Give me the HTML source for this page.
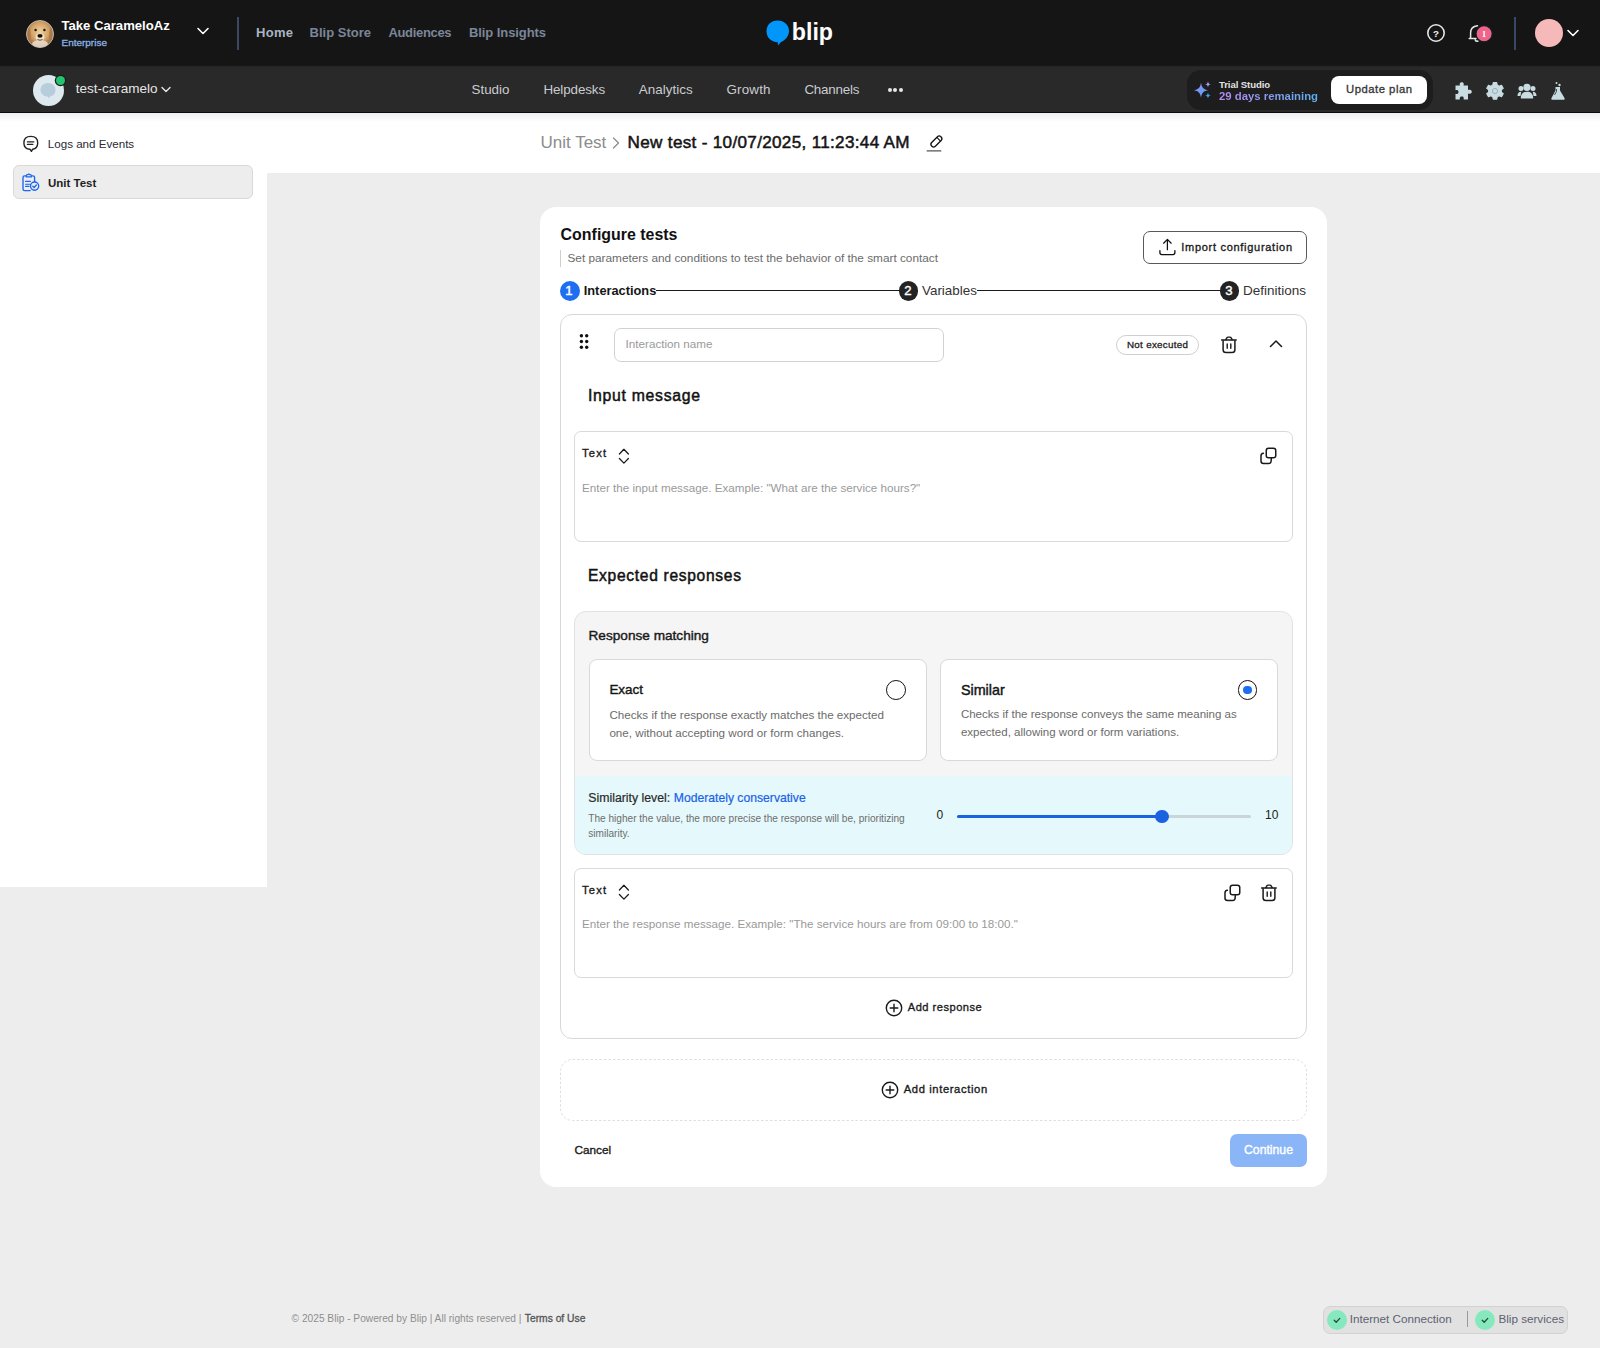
<!DOCTYPE html>
<html><head><meta charset="utf-8"><title>Unit Test</title>
<style>
html,body{margin:0;padding:0;width:1600px;height:1348px;overflow:hidden;background:#ededed}
body{position:relative;font-family:"Liberation Sans",sans-serif}
.a{position:absolute}
.t{position:absolute;line-height:1;white-space:nowrap}
</style></head><body>
<div class="a" style="left:0px;top:0px;width:1600px;height:1348px;background:#ededed"></div>
<div class="a" style="left:0px;top:0px;width:1600px;height:66px;background:#151515"></div>
<div class="a" style="left:0px;top:65px;width:1600px;height:1px;background:#18191a"></div>
<div class="a" style="left:0px;top:66px;width:1600px;height:46px;background:#292929"></div>
<div class="a" style="left:0px;top:66px;width:1600px;height:1px;background:#222324"></div>
<div class="a" style="left:0px;top:112px;width:1600px;height:1px;background:#0a0a0a"></div>
<div class="a" style="left:0px;top:113px;width:267px;height:774px;background:#fff"></div>
<div class="a" style="left:267px;top:113px;width:1333px;height:60px;background:#fff"></div>
<div class="a" style="left:0px;top:113px;width:1600px;height:9px;background:linear-gradient(#eceef2,rgba(255,255,255,0))"></div>
<svg class="a" style="left:26px;top:19.5px;" width="28" height="28" viewBox="0 0 28 28">
<defs><radialGradient id="dg" cx="50%" cy="42%" r="58%"><stop offset="0" stop-color="#f0d2a0"/><stop offset="0.55" stop-color="#d4a469"/><stop offset="1" stop-color="#8e6236"/></radialGradient>
<clipPath id="dc"><circle cx="14" cy="14" r="13.5"/></clipPath></defs>
<circle cx="14" cy="14" r="13.5" fill="url(#dg)"/>
<g clip-path="url(#dc)">
<path d="M0 4 C3 6 5 10 5 16 C5 22 2 26 0 28 Z" fill="#a87444" opacity="0.7"/>
<path d="M28 4 C25 6 23 10 23 16 C23 22 26 26 28 28 Z" fill="#a87444" opacity="0.7"/>
<ellipse cx="14" cy="24" rx="8" ry="4" fill="#efe6d8" opacity="0.8"/>
</g>
<ellipse cx="14" cy="17" rx="4.5" ry="3.6" fill="#f3e3c8"/>
<ellipse cx="14" cy="15.8" rx="2.6" ry="1.9" fill="#15100c"/>
<path d="M11.5 19.5 Q14 21 16.5 19.5" fill="none" stroke="#3a2a1a" stroke-width="0.8"/>
<circle cx="9.6" cy="10" r="1.2" fill="#1e140c"/><circle cx="18.4" cy="10" r="1.2" fill="#1e140c"/>
<circle cx="14" cy="14" r="13.5" fill="none" stroke="#c9c2b8" stroke-width="0.9"/>
</svg>
<div class="t" style="left:61.50px;top:18.71px;font-size:13.1px;font-weight:700;color:#ffffff;">Take CarameloAz</div>
<div class="t" style="left:61.50px;top:38.45px;font-size:9.98px;font-weight:400;color:#8cb1e6;-webkit-text-stroke:0.30px #8cb1e6;">Enterprise</div>
<svg class="a" style="left:196px;top:27.2px;" width="14" height="9" viewBox="0 0 14 9"><path d="M2 1.5 L7 6.5 L12 1.5" fill="none" stroke="#fff" stroke-width="1.6" stroke-linecap="round" stroke-linejoin="round"/></svg>
<div class="a" style="left:237px;top:17px;width:2px;height:33px;background:#3a4865"></div>
<div class="t" style="left:256.00px;top:25.99px;font-size:13px;font-weight:700;color:#a9b4c4;letter-spacing:0.294px;">Home</div>
<div class="t" style="left:309.60px;top:25.99px;font-size:13px;font-weight:700;color:#7b8698;letter-spacing:0.001px;">Blip Store</div>
<div class="t" style="left:388.40px;top:25.99px;font-size:13px;font-weight:700;color:#7b8698;letter-spacing:-0.318px;">Audiences</div>
<div class="t" style="left:469.00px;top:25.99px;font-size:13px;font-weight:700;color:#7b8698;letter-spacing:-0.083px;">Blip Insights</div>
<svg class="a" style="left:765px;top:19px;" width="26" height="28" viewBox="0 0 26 28"><path d="M12.5 1.5 C19 1.5 24 6 24 12 C24 17 20.5 21 16 23 L13 26.5 L12.8 23.3 C6 23 1.5 18.5 1.5 12.2 C1.5 6 6 1.5 12.5 1.5 Z" fill="#0096fa"/></svg>
<div class="t" style="left:791.80px;top:20.86px;font-size:23.2px;font-weight:700;color:#ffffff;">blip</div>
<svg class="a" style="left:1426px;top:23.25px;" width="20" height="20" viewBox="0 0 20 20"><circle cx="10" cy="10" r="8.2" fill="none" stroke="#e6e6e6" stroke-width="1.6"/><text x="9.9" y="13.75" text-anchor="middle" font-family="Liberation Sans" font-weight="700" font-size="9.8" fill="#f0f0f0">?</text></svg>
<svg class="a" style="left:1466px;top:23px;" width="30" height="22" viewBox="0 0 30 22"><path d="M11.5 2.8 C7.5 3.2 4.6 5.8 4.6 10 V15.3 M3.2 15.5 H10 M9.2 16.8 C9.8 18 11 18.4 12 18" fill="none" stroke="#e6e6e6" stroke-width="1.5" stroke-linecap="round"/>
<circle cx="18.1" cy="10.75" r="8.1" fill="#f0648a" stroke="#0f1e26" stroke-width="1.2"/>
<text x="18.1" y="14.2" text-anchor="middle" font-family="Liberation Serif" font-weight="700" font-size="9" fill="#fff">1</text></svg>
<div class="a" style="left:1514px;top:17px;width:2px;height:33px;background:#3a4865"></div>
<div class="a" style="left:1535px;top:19px;width:28px;height:28px;background:#f6b9b9;border-radius:50%"></div>
<svg class="a" style="left:1566px;top:29px;" width="14" height="9" viewBox="0 0 14 9"><path d="M2 1.5 L7 6.5 L12 1.5" fill="none" stroke="#fff" stroke-width="1.6" stroke-linecap="round" stroke-linejoin="round"/></svg>
<div class="a" style="left:32.5px;top:74.5px;width:31px;height:31px;background:#dde9ef;border-radius:50%"></div>
<svg class="a" style="left:37px;top:79px;" width="22" height="22" viewBox="0 0 22 22"><path d="M11 4 C15.5 4 18.5 7 18.5 11 C18.5 14.5 16 17 13 17.6 L11.5 19.5 L11 17.7 C6.5 17.5 3.5 14.5 3.5 11 C3.5 7 6.5 4 11 4 Z" fill="#b7cddb"/></svg>
<div class="a" style="left:55.5px;top:76px;width:9px;height:9px;background:#22c46e;border-radius:50%;box-shadow:0 0 0 1.2px #1c1c1c"></div>
<div class="t" style="left:75.70px;top:82.17px;font-size:13.5px;font-weight:400;color:#e6e6e6;">test-caramelo</div>
<svg class="a" style="left:160px;top:85px;" width="12" height="9" viewBox="0 0 12 9"><path d="M2 2.5 L6 6.5 L10 2.5" fill="none" stroke="#e6e6e6" stroke-width="1.4" stroke-linecap="round" stroke-linejoin="round"/></svg>
<div class="t" style="left:471.50px;top:83.15px;font-size:13.4px;font-weight:400;color:#c9ccd0;letter-spacing:0.001px;">Studio</div>
<div class="t" style="left:543.40px;top:83.15px;font-size:13.4px;font-weight:400;color:#c9ccd0;letter-spacing:-0.095px;">Helpdesks</div>
<div class="t" style="left:638.80px;top:83.15px;font-size:13.4px;font-weight:400;color:#c9ccd0;letter-spacing:0.048px;">Analytics</div>
<div class="t" style="left:726.50px;top:83.15px;font-size:13.4px;font-weight:400;color:#c9ccd0;letter-spacing:0.162px;">Growth</div>
<div class="t" style="left:804.40px;top:83.15px;font-size:13.4px;font-weight:400;color:#c9ccd0;letter-spacing:-0.202px;">Channels</div>
<div class="a" style="left:888.0px;top:87.5px;width:4px;height:4px;background:#e6e6e6;border-radius:50%"></div>
<div class="a" style="left:893.3px;top:87.5px;width:4px;height:4px;background:#e6e6e6;border-radius:50%"></div>
<div class="a" style="left:898.6px;top:87.5px;width:4px;height:4px;background:#e6e6e6;border-radius:50%"></div>
<div class="a" style="left:1186.5px;top:70px;width:246px;height:40px;background:#1d1d1d;border-radius:14px"></div>
<svg class="a" style="left:1192px;top:80px;" width="21" height="20" viewBox="0 0 21 20"><defs><linearGradient id="sp" x1="0" y1="0" x2="1" y2="1"><stop offset="0" stop-color="#a08cf6"/><stop offset="1" stop-color="#4aa6f5"/></linearGradient></defs>
<path d="M9 2.5 C9.6 7.5 11.5 9.6 16.5 10.2 C11.5 10.8 9.6 12.9 9 17.8 C8.4 12.9 6.5 10.8 1.5 10.2 C6.5 9.6 8.4 7.5 9 2.5 Z" fill="url(#sp)"/>
<path d="M16 1.2 C16.3 3.3 16.9 3.9 19 4.3 C16.9 4.7 16.3 5.3 16 7.4 C15.7 5.3 15.1 4.7 13 4.3 C15.1 3.9 15.7 3.3 16 1.2 Z" fill="#a99cf5"/>
<path d="M16 12.5 C16.3 14.6 16.9 15.2 19 15.6 C16.9 16 16.3 16.6 16 18.7 C15.7 16.6 15.1 16 13 15.6 C15.1 15.2 15.7 14.6 16 12.5 Z" fill="#3aa8f2"/></svg>
<div class="t" style="left:1219.00px;top:80.27px;font-size:9.6px;font-weight:700;color:#e2e2e2;letter-spacing:-0.1px">Trial Studio</div>
<div class="t" style="left:1219.00px;top:90.59px;font-size:11.35px;font-weight:700;color:#b08cf0;background:linear-gradient(90deg,#b68cf0,#8a9cf0 50%,#5cb0f0);-webkit-background-clip:text;background-clip:text;-webkit-text-fill-color:transparent">29 days remaining</div>
<div class="a" style="left:1331px;top:76px;width:96px;height:28px;background:#fff;border-radius:8px"></div>
<div class="t" style="left:1346.00px;top:83.73px;font-size:11.3px;font-weight:400;color:#383838;-webkit-text-stroke:0.34px #383838;letter-spacing:0.506px;">Update plan</div>
<svg class="a" style="left:1454px;top:81px;" width="20" height="20" viewBox="0 0 20 20"><path d="M1.5 4.5 H6 C5.5 3.5 5.5 1.2 7.8 1.2 C10.1 1.2 10 3.5 9.5 4.5 H14 V9 C15 8.5 17.8 8.5 17.8 10.8 C17.8 13.1 15 13 14 12.5 V18.5 H9.5 C10 17.5 10.1 15.5 7.8 15.5 C5.5 15.5 5.5 17.5 6 18.5 H1.5 V12.8 C2.5 13.3 4.5 13.3 4.5 11 C4.5 8.7 2.5 8.7 1.5 9.2 Z" fill="#c8dce1"/></svg>
<svg class="a" style="left:1485px;top:81px;" width="20" height="20" viewBox="0 0 20 20"><path d="M8.3 1 H11.7 L12.2 3.4 L14.2 4.5 L16.5 3.6 L18.2 6.5 L16.3 8.1 V10.4 L18.2 12 L16.5 14.9 L14.2 14 L12.2 15.1 L11.7 17.5 H8.3 L7.8 15.1 L5.8 14 L3.5 14.9 L1.8 12 L3.7 10.4 V8.1 L1.8 6.5 L3.5 3.6 L5.8 4.5 L7.8 3.4 Z" fill="#c8dce1" stroke="#c8dce1" stroke-width="1.2" stroke-linejoin="round" transform="translate(0,0.7)"/>
<circle cx="10" cy="10" r="2.6" fill="none" stroke="#9fb0b5" stroke-width="1"/></svg>
<svg class="a" style="left:1517px;top:83px;" width="20" height="17" viewBox="0 0 20 17"><circle cx="10" cy="4.3" r="3.6" fill="#c8dce1"/><path d="M3.8 15.5 C3.8 10.5 6.5 8.8 10 8.8 C13.5 8.8 16.2 10.5 16.2 15.5 Z" fill="#c8dce1"/>
<circle cx="4" cy="5.5" r="2.5" fill="#c8dce1"/><path d="M0.5 13 C0.5 10 2 8.8 4.2 8.8 L3.5 13 Z" fill="#c8dce1"/>
<circle cx="16" cy="5.5" r="2.5" fill="#c8dce1"/><path d="M19.5 13 C19.5 10 18 8.8 15.8 8.8 L16.5 13 Z" fill="#c8dce1"/></svg>
<svg class="a" style="left:1550px;top:81px;" width="16" height="20" viewBox="0 0 16 20"><path d="M5.5 6 H10 V9.5 L14.5 17 C15 18 14.5 18.8 13.5 18.8 H2.5 C1.5 18.8 1 18 1.5 17 L5.5 9.5 Z" fill="#c8dce1"/>
<path d="M6.5 8 V10.5 L4.5 14" fill="none" stroke="#292929" stroke-width="0.8"/>
<circle cx="6.5" cy="2" r="1" fill="#c8dce1"/><circle cx="9.5" cy="4" r="1.2" fill="#c8dce1"/></svg>
<svg class="a" style="left:22px;top:135px;" width="18" height="18" viewBox="0 0 18 18"><path d="M8.8 1.4 C13.4 1.4 15.7 3.6 15.7 7.9 C15.7 11.6 13.7 13.6 10.7 14.2 L9.4 16.3 L8.1 14.3 C4.1 14 1.9 12 1.9 7.9 C1.9 3.6 4.2 1.4 8.8 1.4 Z" fill="none" stroke="#222" stroke-width="1.4" stroke-linejoin="round"/><path d="M5.4 6.9 H11.8 M5.4 9.4 H10.8" stroke="#222" stroke-width="1.3" stroke-linecap="round"/></svg>
<div class="t" style="left:47.80px;top:138.18px;font-size:11.6px;font-weight:400;color:#2a2a35;">Logs and Events</div>
<div class="a" style="left:13px;top:165px;width:240px;height:34px;background:#ededed;border:1px solid #d9d9d9;border-radius:6px;box-sizing:border-box"></div>
<svg class="a" style="left:21px;top:173px;" width="20" height="20" viewBox="0 0 20 20"><path d="M5 2.8 H3.7 C2.6 2.8 2 3.4 2 4.5 V15.9 C2 17 2.6 17.6 3.7 17.6 H9.2 M10.6 2.8 H11.9 C13 2.8 13.6 3.4 13.6 4.5 V8.6" fill="none" stroke="#1a66f0" stroke-width="1.35" stroke-linecap="round"/>
<path d="M5.3 3.9 H10.3 V2.7 C10.3 2.1 9.9 1.7 9.3 1.7 H8.8 L7.8 0.9 L6.8 1.7 H6.3 C5.7 1.7 5.3 2.1 5.3 2.7 Z" fill="none" stroke="#1a66f0" stroke-width="1.2" stroke-linejoin="round"/>
<path d="M4.6 8.4 H9.4 M4.6 11.3 H9 M4.6 13.4 H8" stroke="#1a66f0" stroke-width="1.1" stroke-linecap="round"/>
<circle cx="13.6" cy="13.1" r="4.1" fill="#ededed" stroke="#1a66f0" stroke-width="1.35"/>
<path d="M11.8 13.2 L13.1 14.5 L15.4 12" fill="none" stroke="#1a66f0" stroke-width="1.3" stroke-linecap="round" stroke-linejoin="round"/></svg>
<div class="t" style="left:48.00px;top:177.56px;font-size:11.5px;font-weight:700;color:#1f1f24;letter-spacing:-0.005px;">Unit Test</div>
<div class="t" style="left:540.50px;top:134.21px;font-size:17px;font-weight:400;color:#8c8c8c;">Unit Test</div>
<svg class="a" style="left:611px;top:136px;" width="10" height="14" viewBox="0 0 10 14"><path d="M2.5 2 L7.5 7 L2.5 12" fill="none" stroke="#8c8c8c" stroke-width="1.3" stroke-linecap="round" stroke-linejoin="round"/></svg>
<div class="t" style="left:627.60px;top:134.12px;font-size:17.1px;font-weight:400;color:#141414;-webkit-text-stroke:0.51px #141414;letter-spacing:0.318px;">New test - 10/07/2025, 11:23:44 AM</div>
<svg class="a" style="left:925px;top:134px;" width="20" height="19" viewBox="0 0 20 19"><g transform="rotate(-45 11.4 7.5)"><rect x="4.9" y="4.9" width="13" height="5.2" rx="2.4" fill="none" stroke="#111" stroke-width="1.3"/><path d="M14.6 4.9 V10.1" stroke="#111" stroke-width="1.1"/></g><path d="M2.2 16.9 H15.8" stroke="#555" stroke-width="1.3" stroke-linecap="round"/></svg>
<div class="a" style="left:540px;top:206.5px;width:786.5px;height:980.5px;background:#fff;border-radius:16px"></div>
<div class="t" style="left:560.60px;top:226.50px;font-size:15.95px;font-weight:700;color:#111;">Configure tests</div>
<div class="a" style="left:560px;top:250px;width:1px;height:17px;background:#cfcfcf"></div>
<div class="t" style="left:567.50px;top:252.61px;font-size:11.8px;font-weight:400;color:#6b6b6b;">Set parameters and conditions to test the behavior of the smart contact</div>
<div class="a" style="left:1143px;top:231px;width:164px;height:33px;border:1px solid #5a5a5a;border-radius:7px;box-sizing:border-box;background:#fff"></div>
<svg class="a" style="left:1157px;top:238px;" width="20" height="19" viewBox="0 0 20 19"><path d="M10.4 11.7 V1.6 M6.6 5.2 L10.4 1.4 L14.2 5.2" fill="none" stroke="#111" stroke-width="1.25" stroke-linecap="round" stroke-linejoin="round"/><path d="M2.9 12.6 V14.6 C2.9 15.9 3.6 16.6 4.9 16.6 H15.9 C17.2 16.6 17.9 15.9 17.9 14.6 V12.6" fill="none" stroke="#111" stroke-width="1.3" stroke-linecap="round"/></svg>
<div class="t" style="left:1181.25px;top:241.69px;font-size:11.0px;font-weight:400;color:#1a1a1a;-webkit-text-stroke:0.33px #1a1a1a;letter-spacing:0.712px;">Import configuration</div>
<div class="a" style="left:656px;top:289.5px;width:243px;height:1.5px;background:#1a1a1a"></div>
<div class="a" style="left:977px;top:289.5px;width:243px;height:1.5px;background:#1a1a1a"></div>
<div class="a" style="left:560px;top:281px;width:20px;height:20px;background:#1e6ef2;border-radius:50%"></div>
<div class="t" style="left:565.30px;top:284.02px;font-size:13.2px;font-weight:400;color:#fff;-webkit-text-stroke:0.40px #fff;">1</div>
<div class="t" style="left:583.75px;top:284.76px;font-size:12.8px;font-weight:700;color:#161616;">Interactions</div>
<div class="a" style="left:898.5px;top:281px;width:19.5px;height:19.5px;background:#222;border-radius:50%"></div>
<div class="t" style="left:904.20px;top:284.02px;font-size:13.2px;font-weight:400;color:#fff;-webkit-text-stroke:0.40px #fff;">2</div>
<div class="t" style="left:922.00px;top:284.15px;font-size:13.4px;font-weight:400;color:#333;">Variables</div>
<div class="a" style="left:1219.5px;top:281px;width:19.5px;height:19.5px;background:#222;border-radius:50%"></div>
<div class="t" style="left:1225.20px;top:284.02px;font-size:13.2px;font-weight:400;color:#fff;-webkit-text-stroke:0.40px #fff;">3</div>
<div class="t" style="left:1243.00px;top:284.07px;font-size:13.5px;font-weight:400;color:#333;">Definitions</div>
<div class="a" style="left:560px;top:314px;width:747px;height:725px;border:1px solid #d8d8d8;border-radius:12px;box-sizing:border-box;background:#fff"></div>
<svg class="a" style="left:575px;top:330px;" width="18" height="24" viewBox="0 0 18 24"><circle cx="6.4" cy="5.8" r="1.7" fill="#111"/><circle cx="6.4" cy="11.5" r="1.7" fill="#111"/><circle cx="6.4" cy="17.2" r="1.7" fill="#111"/><circle cx="11.7" cy="5.8" r="1.7" fill="#111"/><circle cx="11.7" cy="11.5" r="1.7" fill="#111"/><circle cx="11.7" cy="17.2" r="1.7" fill="#111"/></svg>
<div class="a" style="left:614px;top:328px;width:330px;height:34px;border:1px solid #d2d2d2;border-radius:7px;box-sizing:border-box"></div>
<div class="t" style="left:625.60px;top:338.21px;font-size:11.68px;font-weight:400;color:#9a9a9a;">Interaction name</div>
<div class="a" style="left:1116px;top:335px;width:83px;height:20px;border:1px solid #cfcfcf;border-radius:10px;box-sizing:border-box"></div>
<div class="t" style="left:1127.00px;top:340.00px;font-size:9.8px;font-weight:400;color:#222;-webkit-text-stroke:0.29px #222;letter-spacing:0.296px;">Not executed</div>
<svg class="a" style="left:1220px;top:335.5px;" width="18" height="18" viewBox="0 0 18 18"><path d="M1.6 4.1 H16.2" fill="none" stroke="#1a1a1a" stroke-width="1.5" stroke-linecap="round"/><path d="M5.6 4.1 L6.8 1.9 C7.1 1.3 7.5 1.1 8.1 1.1 H9.9 C10.5 1.1 10.9 1.3 11.2 1.9 L12.4 4.1" fill="none" stroke="#1a1a1a" stroke-width="1.4" stroke-linejoin="round"/><path d="M3.1 4.3 V13.8 C3.1 15.6 4.1 16.6 5.9 16.6 H12.1 C13.9 16.6 14.9 15.6 14.9 13.8 V4.3" fill="none" stroke="#1a1a1a" stroke-width="1.5" stroke-linejoin="round"/><path d="M7.2 7.9 V12.3 M10.8 7.9 V12.3" stroke="#1a1a1a" stroke-width="1.4" stroke-linecap="round"/></svg>
<svg class="a" style="left:1268px;top:338px;" width="16" height="12" viewBox="0 0 16 12"><path d="M2.5 8.5 L8 3 L13.5 8.5" fill="none" stroke="#1a1a1a" stroke-width="1.5" stroke-linecap="round" stroke-linejoin="round"/></svg>
<div class="t" style="left:588.00px;top:387.72px;font-size:15.8px;font-weight:400;color:#111;-webkit-text-stroke:0.47px #111;letter-spacing:0.697px;">Input message</div>
<div class="a" style="left:574px;top:431px;width:718.5px;height:110.5px;border:1px solid #d9d9d9;border-radius:7px;box-sizing:border-box"></div>
<div class="t" style="left:582.00px;top:447.82px;font-size:11.2px;font-weight:400;color:#1a1a1a;-webkit-text-stroke:0.34px #1a1a1a;letter-spacing:1.236px;">Text</div>
<svg class="a" style="left:617.5px;top:447.5px;" width="12" height="17" viewBox="0 0 12 17"><path d="M1.4 6 L5.9 1.3 L10.4 6 M1.4 10.5 L5.9 15.1 L10.4 10.5" fill="none" stroke="#1a1a1a" stroke-width="1.25" stroke-linecap="round" stroke-linejoin="round"/></svg>
<svg class="a" style="left:1259px;top:446.5px;" width="18" height="18" viewBox="0 0 18 18"><rect x="7.25" y="1.25" width="9.5" height="9.5" rx="2.3" fill="none" stroke="#1a1a1a" stroke-width="1.5"/><path d="M4.4 6.3 C2.9 6.5 2 7.3 2 8.8 V14.1 C2 15.7 2.9 16.6 4.5 16.6 H9.6 C11.1 16.6 12 15.8 12.1 14.3 L12.3 11.6" fill="none" stroke="#1a1a1a" stroke-width="1.5" stroke-linecap="round"/></svg>
<div class="t" style="left:582.00px;top:481.64px;font-size:11.65px;font-weight:400;color:#9a9a9a;">Enter the input message. Example: &quot;What are the service hours?&quot;</div>
<div class="t" style="left:588.00px;top:567.69px;font-size:15.6px;font-weight:400;color:#111;-webkit-text-stroke:0.47px #111;letter-spacing:0.685px;">Expected responses</div>
<div class="a" style="left:574px;top:611px;width:718.5px;height:243.5px;background:#f5f5f5;border:1px solid #e2e2e2;border-radius:12px;box-sizing:border-box;overflow:hidden"></div>
<div class="t" style="left:588.50px;top:629.26px;font-size:13.63px;font-weight:400;color:#1a1a1a;-webkit-text-stroke:0.41px #1a1a1a;">Response matching</div>
<div class="a" style="left:588.5px;top:659.3px;width:338.5px;height:102px;background:#fff;border:1px solid #d9d9d9;border-radius:8px;box-sizing:border-box"></div>
<div class="t" style="left:609.40px;top:683.29px;font-size:13.47px;font-weight:400;color:#151515;-webkit-text-stroke:0.40px #151515;">Exact</div>
<div class="a" style="left:885.8px;top:680px;width:19.8px;height:19.8px;border:1.7px solid #111;border-radius:50%;box-sizing:border-box"></div>
<div class="t" style="left:609.40px;top:709.05px;font-size:11.63px;font-weight:400;color:#6b6b6b;">Checks if the response exactly matches the expected</div>
<div class="t" style="left:609.40px;top:726.75px;font-size:11.63px;font-weight:400;color:#6b6b6b;">one, without accepting word or form changes.</div>
<div class="a" style="left:940px;top:659.3px;width:338px;height:102px;background:#fff;border:1px solid #d9d9d9;border-radius:8px;box-sizing:border-box"></div>
<div class="t" style="left:960.90px;top:682.53px;font-size:14.37px;font-weight:400;color:#151515;-webkit-text-stroke:0.43px #151515;">Similar</div>
<div class="a" style="left:1237.5px;top:680px;width:19.8px;height:19.8px;border:1.7px solid #111;border-radius:50%;box-sizing:border-box"></div>
<div class="a" style="left:1243px;top:685.5px;width:8.8px;height:8.8px;background:#1e6ef2;border-radius:50%"></div>
<div class="t" style="left:960.90px;top:709.14px;font-size:11.53px;font-weight:400;color:#6b6b6b;">Checks if the response conveys the same meaning as</div>
<div class="t" style="left:960.90px;top:726.84px;font-size:11.53px;font-weight:400;color:#6b6b6b;">expected, allowing word or form variations.</div>
<div class="a" style="left:575px;top:775.5px;width:716.5px;height:78px;background:#e5f8fb;border-radius:0 0 11px 11px"></div>
<div class="t" style="left:588.25px;top:792.09px;font-size:12.3px;font-weight:400;color:#2a2a2a;-webkit-text-stroke:0.2px #2a2a2a">Similarity level: </div>
<div class="t" style="left:673.75px;top:792.19px;font-size:12.18px;font-weight:400;color:#1a62e8;-webkit-text-stroke:0.2px #1a62e8">Moderately conservative</div>
<div class="t" style="left:588.25px;top:814.05px;font-size:10.1px;font-weight:400;color:#6e6e6e;">The higher the value, the more precise the response will be, prioritizing</div>
<div class="t" style="left:588.25px;top:829.05px;font-size:10.1px;font-weight:400;color:#6e6e6e;">similarity.</div>
<div class="t" style="left:936.50px;top:809.14px;font-size:12px;font-weight:400;color:#222;">0</div>
<div class="a" style="left:957px;top:815px;width:293.5px;height:3px;background:#c9d5d9;border-radius:2px"></div>
<div class="a" style="left:957px;top:815px;width:205px;height:3px;background:#1a62e0;border-radius:2px"></div>
<div class="a" style="left:1155.25px;top:809.5px;width:13.5px;height:13.5px;background:#1a62e0;border-radius:50%"></div>
<div class="t" style="left:1265.00px;top:809.14px;font-size:12px;font-weight:400;color:#222;">10</div>
<div class="a" style="left:574px;top:868px;width:718.5px;height:110px;border:1px solid #d9d9d9;border-radius:7px;box-sizing:border-box"></div>
<div class="t" style="left:582.00px;top:884.72px;font-size:11.2px;font-weight:400;color:#1a1a1a;-webkit-text-stroke:0.34px #1a1a1a;letter-spacing:1.236px;">Text</div>
<svg class="a" style="left:617.5px;top:884px;" width="12" height="17" viewBox="0 0 12 17"><path d="M1.4 6 L5.9 1.3 L10.4 6 M1.4 10.5 L5.9 15.1 L10.4 10.5" fill="none" stroke="#1a1a1a" stroke-width="1.25" stroke-linecap="round" stroke-linejoin="round"/></svg>
<svg class="a" style="left:1222.5px;top:883.5px;" width="18" height="18" viewBox="0 0 18 18"><rect x="7.25" y="1.25" width="9.5" height="9.5" rx="2.3" fill="none" stroke="#1a1a1a" stroke-width="1.5"/><path d="M4.4 6.3 C2.9 6.5 2 7.3 2 8.8 V14.1 C2 15.7 2.9 16.6 4.5 16.6 H9.6 C11.1 16.6 12 15.8 12.1 14.3 L12.3 11.6" fill="none" stroke="#1a1a1a" stroke-width="1.5" stroke-linecap="round"/></svg>
<svg class="a" style="left:1259.5px;top:883.5px;" width="18" height="18" viewBox="0 0 18 18"><path d="M1.6 4.1 H16.2" fill="none" stroke="#1a1a1a" stroke-width="1.5" stroke-linecap="round"/><path d="M5.6 4.1 L6.8 1.9 C7.1 1.3 7.5 1.1 8.1 1.1 H9.9 C10.5 1.1 10.9 1.3 11.2 1.9 L12.4 4.1" fill="none" stroke="#1a1a1a" stroke-width="1.4" stroke-linejoin="round"/><path d="M3.1 4.3 V13.8 C3.1 15.6 4.1 16.6 5.9 16.6 H12.1 C13.9 16.6 14.9 15.6 14.9 13.8 V4.3" fill="none" stroke="#1a1a1a" stroke-width="1.5" stroke-linejoin="round"/><path d="M7.2 7.9 V12.3 M10.8 7.9 V12.3" stroke="#1a1a1a" stroke-width="1.4" stroke-linecap="round"/></svg>
<div class="t" style="left:582.00px;top:918.13px;font-size:11.66px;font-weight:400;color:#9a9a9a;">Enter the response message. Example: &quot;The service hours are from 09:00 to 18:00.&quot;</div>
<svg class="a" style="left:885px;top:999px;" width="18" height="18" viewBox="0 0 18 18"><circle cx="9" cy="9" r="7.7" fill="none" stroke="#1a1a1a" stroke-width="1.4"/><path d="M9 5.2 V12.8 M5.2 9 H12.8" stroke="#1a1a1a" stroke-width="1.4" stroke-linecap="round"/></svg>
<div class="t" style="left:907.80px;top:1001.80px;font-size:11.1px;font-weight:400;color:#1a1a1a;-webkit-text-stroke:0.33px #1a1a1a;letter-spacing:0.500px;">Add response</div>
<svg class="a" style="left:560px;top:1059px;" width="747" height="62" viewBox="0 0 747 62"><rect x="0.5" y="0.5" width="746" height="61" rx="12" fill="none" stroke="#dedede" stroke-width="1" stroke-dasharray="2.5 2"/></svg>
<svg class="a" style="left:881px;top:1081px;" width="18" height="18" viewBox="0 0 18 18"><circle cx="9" cy="9" r="7.7" fill="none" stroke="#1a1a1a" stroke-width="1.4"/><path d="M9 5.2 V12.8 M5.2 9 H12.8" stroke="#1a1a1a" stroke-width="1.4" stroke-linecap="round"/></svg>
<div class="t" style="left:903.70px;top:1083.62px;font-size:11.2px;font-weight:400;color:#1a1a1a;-webkit-text-stroke:0.34px #1a1a1a;letter-spacing:0.628px;">Add interaction</div>
<div class="t" style="left:574.60px;top:1144.27px;font-size:11.73px;font-weight:400;color:#1a1a1a;-webkit-text-stroke:0.35px #1a1a1a;">Cancel</div>
<div class="a" style="left:1230px;top:1133.5px;width:77px;height:33px;background:#8ab6f8;border-radius:7px"></div>
<div class="t" style="left:1244.00px;top:1143.84px;font-size:12.24px;font-weight:400;color:#ffffff;-webkit-text-stroke:0.37px #ffffff;">Continue</div>
<div class="t" style="left:291.60px;top:1313.98px;font-size:10.18px;font-weight:400;color:#8d8d8d;">© 2025 Blip - Powered by Blip | All rights reserved |</div>
<div class="t" style="left:524.80px;top:1313.89px;font-size:10.29px;font-weight:400;color:#555;-webkit-text-stroke:0.31px #555;">Terms of Use</div>
<div class="a" style="left:1322.5px;top:1305.5px;width:245.5px;height:28px;background:#e1e1e1;border:1px solid #d2d2d2;border-radius:7px;box-sizing:border-box"></div>
<div class="a" style="left:1327px;top:1309.5px;width:20px;height:20px;background:#86e8bd;border-radius:50%"></div>
<svg class="a" style="left:1331px;top:1313.5px;" width="12" height="12" viewBox="0 0 12 12"><path d="M3.2 6.2 L5.2 8.2 L8.8 4.4" fill="none" stroke="#264a3a" stroke-width="1.3" stroke-linecap="round" stroke-linejoin="round"/></svg>
<div class="t" style="left:1349.70px;top:1312.70px;font-size:11.69px;font-weight:400;color:#5d6272;">Internet Connection</div>
<div class="a" style="left:1466.5px;top:1311px;width:1.2px;height:15.5px;background:#999"></div>
<div class="a" style="left:1475px;top:1309.5px;width:20px;height:20px;background:#86e8bd;border-radius:50%"></div>
<svg class="a" style="left:1479px;top:1313.5px;" width="12" height="12" viewBox="0 0 12 12"><path d="M3.2 6.2 L5.2 8.2 L8.8 4.4" fill="none" stroke="#264a3a" stroke-width="1.3" stroke-linecap="round" stroke-linejoin="round"/></svg>
<div class="t" style="left:1498.40px;top:1312.70px;font-size:11.69px;font-weight:400;color:#5d6272;">Blip services</div>
</body></html>
